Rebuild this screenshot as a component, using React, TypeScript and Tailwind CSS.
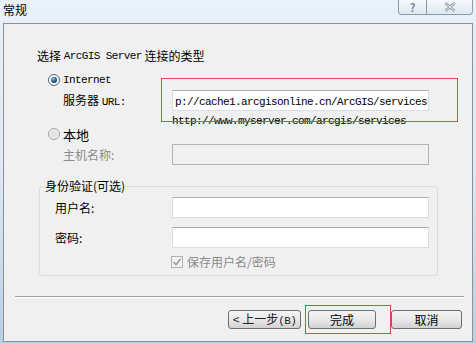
import React from 'react';

// Latin text in the dialog is a narrow monospace face (SimSun-like)
function Mono({ children }: { children: React.ReactNode }) {
  return (
    <span className="font-['Liberation_Mono',monospace] text-[11px] tracking-[-0.6px]">{children}</span>
  );
}

function TextBox({ value, disabled }: { value?: string; disabled?: boolean }) {
  return (
    <div
      className={`flex h-[21px] w-[257px] items-center overflow-hidden border px-[2px] ${
        disabled
          ? 'border-[#b2b5b8] bg-[#f0f0f0]'
          : 'border-[#d9dde4] border-t-[#abadb3] bg-white'
      }`}
    >
      {value && <span className="whitespace-nowrap"><Mono>{value}</Mono></span>}
    </div>
  );
}

function Radio({ checked }: { checked?: boolean }) {
  return (
    <svg width="12" height="12" viewBox="0 0 12 12" className="shrink-0">
      <defs>
        <radialGradient id="rin" cx="0.4" cy="0.35" r="0.7">
          <stop offset="0" stopColor="#8fd0f5" />
          <stop offset="0.5" stopColor="#2c6fa3" />
          <stop offset="1" stopColor="#0d2f52" />
        </radialGradient>
      </defs>
      <circle cx="6" cy="6" r="5.5" fill={checked ? '#f4f4f4' : '#ececec'} stroke={checked ? '#5e6a76' : '#a5a5a5'} />
      {checked ? (
        <circle cx="6" cy="6" r="3" fill="url(#rin)" />
      ) : (
        <circle cx="6" cy="6" r="3.5" fill="#e2e2e2" />
      )}
    </svg>
  );
}

function Button({ children, width }: { children: React.ReactNode; width: string }) {
  return (
    <div
      className={`flex h-[19px] ${width} items-center justify-center rounded-[3px] border border-[#707070] bg-gradient-to-b from-[#f4f4f4] via-[#e9e9e9] to-[#d2d2d2] text-[12px] text-black`}
    >
      {children}
    </div>
  );
}

export default function App() {
  return (
    <div className="relative flex h-[343px] w-[476px] flex-col overflow-hidden bg-gradient-to-b from-[#e9f1f9] via-[#dde9f4] to-[#b9cfe4] font-['Noto_Sans_CJK_SC',sans-serif] text-[12px] leading-none text-black">
      {/* Title bar */}
      <div className="flex h-[23px] shrink-0 items-start justify-between">
        <span className="ml-[3px] mt-[3px] leading-[14px]">常规</span>
        <div className="mr-[3px] flex h-[15px]">
          <div className="flex w-[29px] items-center justify-center rounded-bl-[4px] border border-t-0 border-[#8b9aab] bg-gradient-to-b from-[#f6f9fc] to-[#dfe8f1]">
            <span className="text-[11px] font-bold leading-none text-[#7d8792]">?</span>
          </div>
          <div className="flex w-[46px] items-center justify-center rounded-br-[4px] border border-l-0 border-t-0 border-[#8b9aab] bg-gradient-to-b from-[#f6f9fc] to-[#dfe8f1]">
            <svg width="12" height="10" viewBox="0 0 12 10">
              <path d="M1.5 1 L10.5 9 M10.5 1 L1.5 9" stroke="#8f98a2" strokeWidth="2.6" />
              <path d="M1.5 1 L10.5 9 M10.5 1 L1.5 9" stroke="#f2f4f6" strokeWidth="1" />
            </svg>
          </div>
        </div>
      </div>

      {/* Client area */}
      <div className="ml-[3px] flex h-[319px] w-[470px] flex-col border border-[#8d9196] bg-[#f0f0f0]">
        <div className="ml-[33px] mt-[24px] flex h-[16px] items-center">
          选择&nbsp;<Mono>ArcGIS Server</Mono>&nbsp;连接的类型
        </div>

        <div className="ml-[44px] mt-[8px] flex h-[16px] items-center gap-[3px]">
          <Radio checked />
          <Mono>Internet</Mono>
        </div>

        <div className="ml-[59px] mt-[2px] flex h-[21px] items-center">
          <span className="w-[109px]">
            服务器 <Mono>URL:</Mono>
          </span>
          <TextBox value="p://cache1.arcgisonline.cn/ArcGIS/services" />
        </div>

        <div className="ml-[168px] mt-[4px] flex h-[12px] items-center">
          <Mono>http://www.myserver.com/arcgis/services</Mono>
        </div>

        <div className="ml-[44px] flex h-[14px] items-center gap-[3px]">
          <Radio />
          <span className="text-[13px]">本地</span>
        </div>

        <div className="ml-[59px] mt-[3px] flex h-[21px] items-center">
          <span className="w-[109px] text-[#8a8a8a]">主机名称:</span>
          <TextBox disabled />
        </div>

        {/* Authentication group */}
        <fieldset className="ml-[35px] mt-[14px] w-[399px] rounded-[3px] border border-[#d5dfe5] pb-[6px]">
          <legend className="ml-[5px] h-[14px] leading-[14px]">身份验证(可选)</legend>
          <div className="mt-[4px] flex h-[21px] items-center pl-[15px]">
            <span className="w-[117px]">用户名:</span>
            <TextBox />
          </div>
          <div className="mt-[9px] flex h-[21px] items-center pl-[15px]">
            <span className="w-[117px]">密码:</span>
            <TextBox />
          </div>
          <div className="ml-[131px] mt-[7px] flex h-[14px] items-center gap-[4px] text-[#8a8a8a]">
            <svg width="12" height="12" viewBox="0 0 12 12" className="shrink-0">
              <rect x="0.5" y="0.5" width="11" height="11" fill="#f4f4f4" stroke="#b1b1b1" />
              <path d="M2.5 6 L5 8.8 L9.5 2.8" fill="none" stroke="#9d9d9d" strokeWidth="1.6" />
            </svg>
            <span>保存用户名/密码</span>
          </div>
        </fieldset>

        {/* Separator */}
        <div className="ml-[11px] mt-[20px] w-[449px] border-t border-b border-t-[#a0a0a0] border-b-white" />

        {/* Buttons */}
        <div className="mr-[10px] mt-[12px] flex justify-end">
          <Button width="w-[73px]">
            <span className="text-[#222]">&lt; 上一步<Mono>(B)</Mono></span>
          </Button>
          <div className="ml-[7px]">
            <Button width="w-[68px]">完成</Button>
          </div>
          <div className="ml-[15px]">
            <Button width="w-[71px]">取消</Button>
          </div>
        </div>
      </div>

      {/* Red annotation boxes */}
      <div className="pointer-events-none absolute left-[161px] top-[78px] h-[44px] w-[297px] border border-[#e0474c]" />
      <div className="pointer-events-none absolute left-[305px] top-[305px] h-[29px] w-[86px] border border-[#e0474c]" />
    </div>
  );
}
